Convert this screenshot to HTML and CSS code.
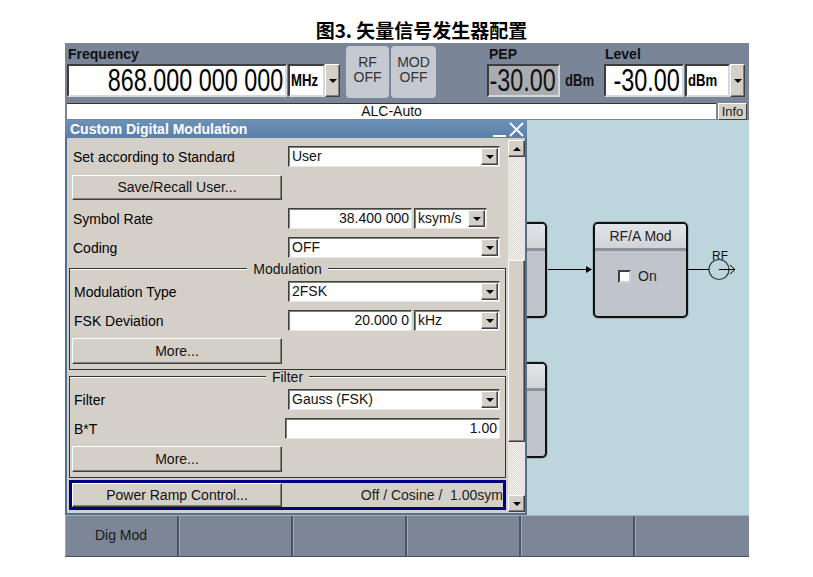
FILE: index.html
```html
<!DOCTYPE html>
<html>
<head>
<meta charset="utf-8">
<link rel="stylesheet" href="styles.css">
</head>
<body>
<div class="title">图3. 矢量信号发生器配置</div>
<div class="screen">
  <div class="header">
    <div class="hgroup freq">
      <div class="hlabel">Frequency</div>
      <div class="hrow">
        <div class="bigbox white w-freq"><span class="nar n-freq">868.000 000 000</span></div>
        <div class="unitbox w-mhz"><span class="nar n-unit">MHz</span></div>
        <div class="ddbtn big"><i class="tri"></i></div>
      </div>
    </div>
    <div class="hbtn rf">RF<br>OFF</div>
    <div class="hbtn mod">MOD<br>OFF</div>
    <div class="hgroup pep">
      <div class="hlabel">PEP</div>
      <div class="hrow">
        <div class="bigbox gray w-pep"><span class="nar n-lvl">-30.00</span></div>
        <div class="unittext"><span class="nar n-unit">dBm</span></div>
      </div>
    </div>
    <div class="hgroup level">
      <div class="hlabel">Level</div>
      <div class="hrow">
        <div class="bigbox white w-lvl"><span class="nar n-lvl">-30.00</span></div>
        <div class="unitbox w-dbm"><span class="nar n-unit">dBm</span></div>
        <div class="ddbtn big"><i class="tri"></i></div>
      </div>
    </div>
  </div>
  <div class="alcrow">
    <div class="alc">ALC-Auto</div>
    <div class="info">Info</div>
  </div>
  <div class="main">
    <div class="dialog">
      <div class="dtitle">
        <span>Custom Digital Modulation</span>
        <svg class="wbtns" width="34" height="17" viewBox="0 0 34 17">
          <line x1="2" y1="15" x2="15" y2="15" stroke="#fff" stroke-width="2"/>
          <line x1="19" y1="2" x2="32" y2="15" stroke="#fff" stroke-width="2"/>
          <line x1="32" y1="2" x2="19" y2="15" stroke="#fff" stroke-width="2"/>
        </svg>
      </div>
      <div class="dbody">
        <div class="content">
          <div class="row r1">
            <div class="lbl">Set according to Standard</div>
            <div class="field sel w212"><span class="val">User</span><span class="ddbtn"><i class="tri"></i></span></div>
          </div>
          <div class="btn b-top">Save/Recall User...</div>
          <div class="row">
            <div class="lbl">Symbol Rate</div>
            <div class="field num w124"><span class="val">38.400 000</span></div>
            <div class="field sel w73 ml2"><span class="val">ksym/s</span><span class="ddbtn"><i class="tri"></i></span></div>
          </div>
          <div class="row">
            <div class="lbl">Coding</div>
            <div class="field sel w212"><span class="val">OFF</span><span class="ddbtn"><i class="tri"></i></span></div>
          </div>

          <div class="group">
            <div class="ghead"><span>Modulation</span></div>
            <div class="gbody">
              <div class="row first">
                <div class="lbl">Modulation Type</div>
                <div class="field sel w212"><span class="val">2FSK</span><span class="ddbtn"><i class="tri"></i></span></div>
              </div>
              <div class="row">
                <div class="lbl">FSK Deviation</div>
                <div class="field num w124"><span class="val">20.000 0</span></div>
                <div class="field sel w86 ml2"><span class="val">kHz</span><span class="ddbtn"><i class="tri"></i></span></div>
              </div>
              <div class="btn b-grp">More...</div>
            </div>
          </div>

          <div class="group">
            <div class="ghead"><span>Filter</span></div>
            <div class="gbody">
              <div class="row first">
                <div class="lbl">Filter</div>
                <div class="field sel w212"><span class="val">Gauss (FSK)</span><span class="ddbtn"><i class="tri"></i></span></div>
              </div>
              <div class="row">
                <div class="lbl short">B*T</div>
                <div class="field num w215"><span class="val">1.00</span></div>
              </div>
              <div class="btn b-grp">More...</div>
            </div>
          </div>

          <div class="ramp">
            <div class="btn b-ramp">Power Ramp Control...</div>
            <div class="ramptext">Off / Cosine /&nbsp; 1.00sym</div>
          </div>
        </div>
        <div class="scroll">
          <div class="sbtn"><i class="tri up"></i></div>
          <div class="track t1"></div>
          <div class="thumb"></div>
          <div class="track t2"></div>
          <div class="sbtn"><i class="tri"></i></div>
        </div>
      </div>
    </div>
    <div class="diagram">
      <div class="block b1"><div class="bhead"></div></div>
      <div class="block b2"><div class="bhead"></div></div>
      <div class="block b3">
        <div class="bhead">RF/A Mod</div>
        <div class="bbody"><span class="chk"></span><span>On</span></div>
      </div>
      <div class="rflbl">RF</div>
      <svg class="wires" width="222" height="395" viewBox="0 0 222 395">
        <line x1="21" y1="149.5" x2="60" y2="149.5" stroke="#000" stroke-width="1"/>
        <polygon points="59,146 65,149.5 59,153" fill="#000"/>
        <line x1="161" y1="149.5" x2="182" y2="149.5" stroke="#000" stroke-width="1"/>
        <circle cx="192" cy="149.5" r="10" fill="none" stroke="#333" stroke-width="1.2"/>
        <line x1="192" y1="149.5" x2="208" y2="149.5" stroke="#000" stroke-width="1"/>
        <polyline points="203,145 208,149.5 203,154" fill="none" stroke="#000" stroke-width="1"/>
      </svg>
    </div>
  </div>
  <div class="softkeys">
    <div class="sk">Dig Mod</div>
    <div class="sk"></div>
    <div class="sk"></div>
    <div class="sk"></div>
    <div class="sk"></div>
    <div class="sk"></div>
  </div>
</div>
</body>
</html>
```

FILE: styles.css
```css
* { box-sizing: border-box; }
body {
  margin: 0;
  background: #fff;
  font-family: "Liberation Sans", Arial, sans-serif;
  font-size: 14px;
  color: #000;
}
.title {
  height: 43px;
  padding: 19px 0 0 30px;
  text-align: center;
  font-family: "Noto Sans CJK SC", sans-serif;
  font-weight: 700;
  font-size: 19px;
  line-height: 22px;
}
.screen {
  margin-left: 65px;
  width: 684px;
  height: 514px;
  display: flex;
  flex-direction: column;
}

/* header */
.header {
  height: 59px;
  background: #7a8598;
  display: flex;
  align-items: flex-start;
}
.hgroup { display: flex; flex-direction: column; }
.hlabel {
  height: 21px;
  padding: 3px 0 0 1px;
  font-weight: 700;
  font-size: 14px;
  line-height: 16px;
  color: #111;
}
.hrow { display: flex; align-items: stretch; height: 33px; }
.freq { margin-left: 2px; }
.pep { margin-left: 51px; }
.pep .hlabel { padding-left: 2px; }
.level { margin-left: 9px; }
.level .hlabel { padding-left: 1px; }
.nar {
  display: inline-block;
  flex: 0 0 auto;
  white-space: nowrap;
}
.bigbox {
  display: flex;
  justify-content: flex-end;
  align-items: center;
  font-size: 32px;
  line-height: 29px;
  padding-right: 2px;
  border: 2px solid;
  border-color: #3c3c3c #d8d8d8 #d8d8d8 #3c3c3c;
  color: #000;
}
.bigbox .nar { transform-origin: right center; transform: scaleX(0.73); }
.n-freq { margin-left: -65px; }
.n-lvl { margin-left: -25px; }
.bigbox.white { background: #fff; }
.bigbox.gray { background: #a9acb0; color: #111; }
.w-freq { width: 220px; }
.w-pep { width: 73px; }
.w-lvl { width: 80px; }
.unitbox {
  display: flex;
  align-items: center;
  margin-left: 1px;
  background: #fff;
  border: 2px solid;
  border-color: #3c3c3c #d8d8d8 #d8d8d8 #3c3c3c;
  font-weight: 700;
  font-size: 16px;
  line-height: 29px;
  padding-left: 1px;
}
.n-unit { transform-origin: left center; transform: scaleX(0.82); margin-right: -7px; }
.w-mhz { width: 37px; }
.w-dbm { width: 45px; }
.unittext {
  margin-left: 5px;
  width: 30px;
  display: flex;
  align-items: center;
  font-weight: 700;
  font-size: 16px;
  line-height: 33px;
  color: #111;
}
.ddbtn {
  width: 16px;
  flex: 0 0 16px;
  background: #d4d0c8;
  border: 1px solid;
  border-color: #fff #404040 #404040 #fff;
  box-shadow: inset -1px -1px #808080;
  display: flex;
  align-items: center;
  justify-content: center;
}
.ddbtn.big { width: 15px; flex-basis: 15px; }
.tri {
  display: block;
  width: 0;
  height: 0;
  border-left: 4px solid transparent;
  border-right: 4px solid transparent;
  border-top: 4px solid #000;
}
.tri.up { border-top: none; border-bottom: 4px solid #000; }
.hbtn {
  margin-top: 3px;
  height: 52px;
  background: #c4c9d2;
  border-radius: 4px;
  text-align: center;
  font-size: 14px;
  line-height: 15px;
  padding-top: 9px;
  color: #333;
}
.rf { margin-left: 6px; width: 43px; }
.mod { margin-left: 2px; width: 45px; }

/* alc row */
.alcrow {
  height: 18px;
  background: #7a8598;
  display: flex;
  padding-top: 1px;
}
.alc {
  margin-left: 2px;
  width: 649px;
  height: 16px;
  background: #fff;
  border-top: 1px solid #333;
  text-align: center;
  font-size: 14px;
  line-height: 15px;
  color: #111;
}
.info {
  margin-left: 2px;
  width: 29px;
  height: 17px;
  background: #d4d0c8;
  border: 1px solid;
  border-color: #fff #404040 #404040 #fff;
  font-size: 13px;
  line-height: 15px;
  text-align: center;
  color: #222;
}

/* main */
.main { height: 395px; display: flex; }
.dialog {
  width: 462px;
  flex: 0 0 462px;
  display: flex;
  flex-direction: column;
  background: #d4d0c8;
  border: 2px solid #4f7196;
  border-top: none;
}
.dtitle {
  height: 18px;
  margin: 0 -2px;
  background: linear-gradient(#6d90b6, #5a7fa8);
  color: #fff;
  font-weight: 700;
  font-size: 14px;
  line-height: 18px;
  padding-left: 5px;
  display: flex;
  justify-content: space-between;
  align-items: center;
}
.wbtns { margin-right: 2px; }
.dbody { flex: 1; display: flex; }
.content { width: 439px; display: flex; flex-direction: column; }
.row { display: flex; align-items: stretch; height: 21px; margin-top: 8px; }
.lbl {
  flex: 0 0 221px;
  padding-left: 6px;
  line-height: 22px;
  white-space: nowrap;
}
.group .lbl { flex-basis: 218px; padding-left: 4px; }
.group .lbl.short { flex-basis: 215px; }
.field {
  background: #fff;
  border: 1px solid;
  border-color: #404040 #e8e8e8 #e8e8e8 #404040;
  box-shadow: inset 1px 1px #808080;
  display: flex;
  line-height: 19px;
  color: #111;
}
.field .val { flex: 1; padding-left: 3px; white-space: nowrap; }
.field.num .val { text-align: right; padding-right: 2px; }
.field .ddbtn { flex: 0 0 17px; margin: 1px 1px 1px 0; }
.w212 { width: 212px; }
.w124 { width: 124px; }
.w73 { width: 73px; }
.w86 { width: 86px; }
.w215 { width: 215px; }
.ml2 { margin-left: 2px; }
.btn {
  width: 210px;
  height: 25px;
  background: #d4d0c8;
  border: 1px solid;
  border-color: #fff #404040 #404040 #fff;
  box-shadow: inset -1px -1px #808080;
  text-align: center;
  line-height: 23px;
  color: #111;
}
.b-top { margin: 8px 0 0 5px; }
.b-grp { margin: 7px 0 0 2px; height: 26px; line-height: 24px; }

.group { margin: 0 0 0 2px; width: 437px; }
.group + .group .ghead { margin-top: 0; }
.ghead {
  margin-top: 4px;
  height: 14px;
  display: flex;
  align-items: flex-end;
}
.ghead::before, .ghead::after {
  content: "";
  flex: 1;
  height: 7px;
  border-top: 1px solid #333;
  box-shadow: inset 0 1px #fff;
}
.ghead::before { border-left: 1px solid #333; }
.ghead::after { border-right: 1px solid #333; }
.ghead span {
  padding: 0 6px;
  line-height: 15px;
  align-self: center;
  color: #111;
}
.gbody {
  border: 1px solid #333;
  border-top: none;
  height: 94px;
  padding-top: 5px;
}
.gbody .row.first { margin-top: 0; }

.ramp {
  margin: 2px 0 0 2px;
  width: 437px;
  height: 30px;
  border: 3px solid #000080;
  display: flex;
}
.b-ramp { height: 24px; line-height: 22px; }
.ramptext {
  flex: 1;
  text-align: right;
  line-height: 25px;
  color: #222;
  white-space: nowrap;
}

/* scrollbar */
.scroll {
  margin: 2px 0 1px 2px;
  width: 18px;
  display: flex;
  flex-direction: column;
}
.sbtn {
  height: 17px;
  background: #d4d0c8;
  border: 1px solid;
  border-color: #fff #404040 #404040 #fff;
  box-shadow: inset -1px -1px #808080;
  display: flex;
  align-items: center;
  justify-content: center;
}
.track {
  background-color: #ebe9e5;
  background-image: repeating-conic-gradient(#dcd9d3 0 25%, #f3f2ef 0 50%);
  background-size: 2px 2px;
}
.t1 { height: 103px; }
.t2 { flex: 1; }
.thumb {
  height: 182px;
  background: #d4d0c8;
  border: 1px solid;
  border-color: #fff #404040 #404040 #fff;
  box-shadow: inset -1px -1px #808080;
}

/* diagram */
.diagram {
  flex: 1;
  position: relative;
  overflow: hidden;
  background: #bdd6de;
}
.block {
  position: absolute;
  width: 95px;
  height: 96px;
  border: 2px solid #111;
  border-radius: 5px;
  background: #c0c4cb;
  box-shadow: 0 0 0 1px rgba(110, 120, 130, 0.35);
  overflow: hidden;
}
.bhead {
  height: 27px;
  background: linear-gradient(#e2e5e8, #d0d4d8);
  border-bottom: 3px solid #8d9298;
  text-align: center;
  line-height: 24px;
  color: #222;
}
.b1 { left: -75px; top: 102px; }
.b2 { left: -75px; top: 242px; }
.b3 { left: 66px; top: 102px; }
.bbody {
  display: flex;
  align-items: center;
  padding: 17px 0 0 23px;
  gap: 7px;
  color: #222;
}
.chk {
  width: 13px;
  height: 13px;
  background: #fff;
  border: 2px solid;
  border-color: #404040 #d0d0d0 #d0d0d0 #404040;
}
.rflbl {
  position: absolute;
  left: 185px;
  top: 130px;
  font-size: 12px;
  line-height: 12px;
  color: #111;
}
.wires { position: absolute; left: 0; top: 0; }

/* softkeys */
.softkeys {
  height: 42px;
  display: grid;
  grid-template-columns: repeat(6, 1fr);
  background: #7c8696;
  border-top: 1px solid #a7aeb8;
  border-bottom: 1px solid #4a505a;
}
.sk {
  border-right: 2px solid #4f5560;
  box-shadow: inset 1px 0 #a0a7b1;
  text-align: center;
  line-height: 38px;
  font-size: 14px;
  color: #1a1a1a;
}
.sk:last-child { border-right: none; }
```
